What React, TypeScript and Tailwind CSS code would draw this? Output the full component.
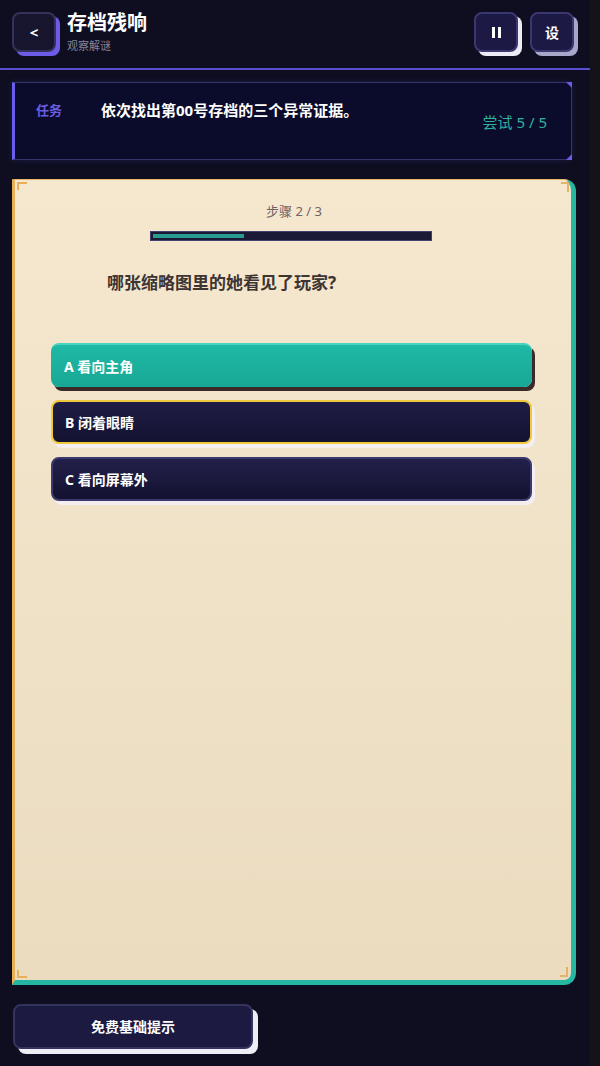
export default function App() {
  const options = [
    { key: "A", label: "看向主角", kind: "picked" },
    { key: "B", label: "闭着眼睛", kind: "focus" },
    { key: "C", label: "看向屏幕外", kind: "idle" },
  ]

  return (
    <div
      className="flex h-[1066px] w-[600px] overflow-hidden bg-[#131318]"
      style={{ fontFamily: '"Noto Sans", "Noto Sans CJK SC", sans-serif' }}
    >
      <div className="flex w-[590px] flex-col bg-[#0e0e20]">
        {/* header */}
        <div className="flex h-[68px] items-start px-3 pt-3">
          <button className="flex h-[40px] w-[44px] items-center justify-center rounded-lg border-2 border-[#34325a] bg-[#17162e] text-[15px] font-bold text-white shadow-[4px_4px_0_#6d5ce8]">
            &lt;
          </button>
          <div className="ml-[11px] flex flex-col">
            <div className="text-[20px] font-bold leading-[22px] text-white">存档残响</div>
            <div className="mt-[5px] text-[11px] leading-[13px] text-[#85849c]">观察解谜</div>
          </div>
          <div className="ml-auto mr-[4px] flex gap-3">
            <button className="flex h-[40px] w-[44px] items-center justify-center rounded-lg border-2 border-[#3b3870] bg-[#1c1a44] text-[14px] font-bold text-white shadow-[4px_4px_0_#ecebf5]">
              <span className="flex gap-[3px]">
                <span className="h-[11px] w-[3px] bg-white" />
                <span className="h-[11px] w-[3px] bg-white" />
              </span>
            </button>
            <button className="flex h-[40px] w-[44px] items-center justify-center rounded-lg border-2 border-[#3b3870] bg-[#1c1a44] text-[14px] font-bold text-white shadow-[4px_4px_0_#a9a7c9]">
              设
            </button>
          </div>
        </div>
        <div className="h-[2px] bg-[#5a4fd2]" />

        {/* task panel */}
        <div className="relative ml-3 mt-[12px] flex h-[78px] w-[560px] rounded-r-md border border-[#34336a] border-l-[3px] border-l-[#6c5ce7] bg-[#0b0c2c] shadow-[0_0_6px_#1d1c4a]">
          <span className="absolute -right-px -top-px h-0 w-0 border-l-[6px] border-t-[6px] border-l-transparent border-t-[#6c5ce7]" />
          <span className="absolute -bottom-px -right-px h-0 w-0 border-b-[6px] border-l-[6px] border-b-[#6c5ce7] border-l-transparent" />
          <div className="ml-[21px] mt-[18px] text-[13px] font-bold text-[#6a5ce0]">任务</div>
          <div className="ml-[39px] mt-[16px] text-[15px] font-bold text-white">依次找出第00号存档的三个异常证据。</div>
          <div className="ml-auto mr-[24px] mt-[28px] text-[15px] text-[#2fb29e]">尝试 5 / 5</div>
        </div>

        {/* card */}
        <div className="relative ml-3 mt-[19px] flex h-[806px] w-[564px] flex-col rounded-tr-xl rounded-br-xl border-t border-[#e9b768] border-l-[3px] border-l-[#e9b05a] border-r-[5px] border-r-[#26b7a2] border-b-[5px] border-b-[#26b7a2] bg-[#f4e6cd] bg-gradient-to-b from-[#f5e8cf] to-[#ebdcc0]">
          <span className="absolute left-[2px] top-[2px] h-[8px] w-[10px] border-l-2 border-t-2 border-[#e9b05a]" />
          <span className="absolute right-[2px] top-[2px] h-[10px] w-[8px] border-r-2 border-t-2 border-[#e3b36a]" />
          <span className="absolute bottom-[2px] left-[2px] h-[8px] w-[10px] border-b-2 border-l-2 border-[#e9b05a]" />
          <span className="absolute bottom-[3px] right-[3px] h-[10px] w-[8px] border-b-2 border-r-2 border-[#e3b36a]" />
          <div className="mt-[22px] pl-[2px] text-center text-[13px] text-[#6e6266]">步骤 2 / 3</div>
          <div className="ml-[135px] mt-[9px] h-[10px] w-[282px] border border-[#43406e] bg-[#1b1a34] p-[2px]">
            <div className="h-full w-[33%] bg-[#279b8d]" />
          </div>
          <div className="ml-[92px] mt-[29px] text-[17px] font-bold text-[#3e3432]">哪张缩略图里的她看见了玩家?</div>

          <div className="ml-[36px] mt-[48px] flex w-[481px] flex-col gap-[13px]">
            {options.map((o) => (
              <div
                key={o.key}
                className={
                  o.kind === "picked"
                    ? "flex h-[44px] items-center rounded-lg border-t-2 border-[#48d4bf] bg-gradient-to-b from-[#1fb9a5] to-[#17a895] px-[13px] text-[14px] font-bold text-white shadow-[3px_4px_0_#3b2b28]"
                    : o.kind === "focus"
                      ? "flex h-[44px] items-center rounded-lg border-2 border-[#f0c83c] bg-gradient-to-b from-[#1f1d45] to-[#141230] px-[12px] text-[14px] font-bold text-white shadow-[3px_4px_0_#f4eef0]"
                      : "flex h-[44px] items-center rounded-lg border-2 border-[#3c3a6c] bg-gradient-to-b from-[#22204a] to-[#141230] px-[12px] text-[14px] font-bold text-white shadow-[3px_4px_0_#f4eef0]"
                }
              >
                {o.key} {o.label}
              </div>
            ))}
          </div>
        </div>

        {/* hint button */}
        <div className="mt-[19px] px-[13px]">
          <button className="flex h-[45px] w-[240px] items-center justify-center rounded-lg border-2 border-[#34325e] bg-[#1c1a40] text-[14px] font-bold text-white shadow-[5px_5px_0_#eeeef6]">
            免费基础提示
          </button>
        </div>
      </div>
    </div>
  )
}
